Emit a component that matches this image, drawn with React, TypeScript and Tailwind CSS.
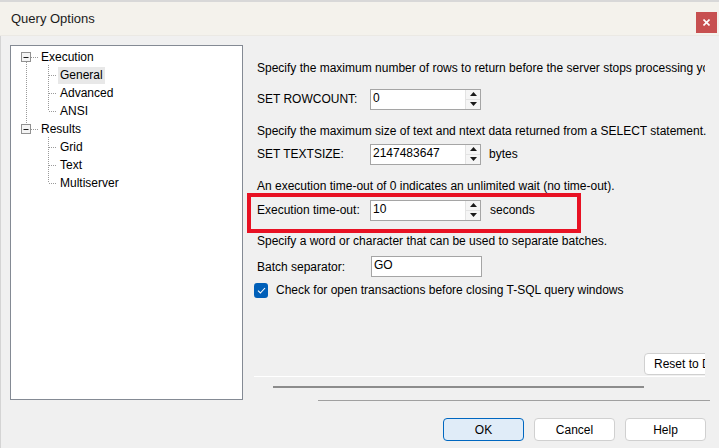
import React from "react";

const font = { fontFamily: '"Liberation Sans", Arial, sans-serif' };

function Spin() {
  return (
    <div className="flex flex-col w-[15px] h-full border-l border-[#e3e3e3] bg-[#f5f5f5]">
      <div className="flex-1 flex items-center justify-center border-b border-[#e3e3e3]">
        <svg width="7" height="4" viewBox="0 0 7 4">
          <path d="M0 4 L3.5 0 L7 4 Z" fill="#1a1a1a" />
        </svg>
      </div>
      <div className="flex-1 flex items-center justify-center">
        <svg width="7" height="4" viewBox="0 0 7 4">
          <path d="M0 0 L3.5 4 L7 0 Z" fill="#1a1a1a" />
        </svg>
      </div>
    </div>
  );
}

function NumInput({ value, spin = true }: { value: string; spin?: boolean }) {
  return (
    <div className="flex items-stretch w-[111px] h-[21px] bg-white border border-[#a5a5a5]">
      <div className="flex-1 pl-[2px] leading-[17px] text-[12px] text-black">{value}</div>
      {spin && <Spin />}
    </div>
  );
}

function Expander({ y }: { y: number }) {
  return (
    <g>
      <rect x="10.5" y={y - 4.5} width="9" height="9" fill="#f4f4f4" stroke="#919191" />
      <path d={`M12.5 ${y + 0.5} H17.5`} stroke="#1a1a1a" />
    </g>
  );
}

function Tree() {
  const dot = { stroke: "#9a9a9a", strokeDasharray: "1 1" };
  const rows: { label: string; child?: boolean; sel?: boolean }[] = [
    { label: "Execution" },
    { label: "General", child: true, sel: true },
    { label: "Advanced", child: true },
    { label: "ANSI", child: true },
    { label: "Results" },
    { label: "Grid", child: true },
    { label: "Text", child: true },
    { label: "Multiserver", child: true },
  ];
  return (
    <div className="relative w-[233px] h-[355px] bg-white border border-[#848a94]">
      <svg className="absolute left-0 top-0" width="231" height="353">
        <path d="M15.5 16 V78" {...dot} />
        <path d="M20 11.5 H27" {...dot} />
        <path d="M20 83.5 H27" {...dot} />
        <path d="M37.5 19 V65" {...dot} />
        <path d="M37.5 91 V137" {...dot} />
        {[29, 47, 65, 101, 119, 137].map((y) => (
          <path key={y} d={`M38 ${y + 0.5} H46`} {...dot} />
        ))}
        <Expander y={11} />
        <Expander y={83} />
      </svg>
      <div className="relative pt-[2px] flex flex-col">
        {rows.map((r) => (
          <div key={r.label} className={`h-[18px] flex items-center ${r.child ? "pl-[47px]" : "pl-[28px]"}`}>
            <span className={`px-[2px] leading-[17px] text-[12px] text-black ${r.sel ? "bg-[#e8e8e8]" : ""}`}>
              {r.label}
            </span>
          </div>
        ))}
      </div>
    </div>
  );
}

function Btn({ label, primary }: { label: string; primary?: boolean }) {
  return (
    <div
      className={`w-[81px] h-[23px] rounded-[4px] flex items-center justify-center text-[12px] text-black border ${
        primary ? "bg-[#e0ecf8] border-[#0067c0]" : "bg-white border-[#d0d0d0]"
      }`}
    >
      {label}
    </div>
  );
}

export default function App() {
  return (
    <div className="w-[719px] h-[448px] overflow-hidden bg-[#f0f0f0] text-black" style={font}>
      {/* title bar */}
      <div className="h-[36px] bg-[#f4f2ec] border-t-2 border-[#d8d8d8] border-b border-b-[#ebe9e4] flex items-center justify-between pl-[11px] pr-[2px]">
        <span className="text-[13px] text-[#1b1b1b]">Query Options</span>
        <div className="w-[21px] h-[21px] mt-[8px] bg-[#c75050] flex items-center justify-center">
          <svg width="7" height="7" viewBox="0 0 7 7">
            <path d="M0.5 0.5 L6.5 6.5 M6.5 0.5 L0.5 6.5" stroke="#fff" strokeWidth="1.6" />
          </svg>
        </div>
      </div>

      <div className="border-l border-[#d4d4d4] h-[412px]">
        <div className="flex pt-[9px] pl-[9px]">
          <Tree />
          <div className="ml-[11px] w-[451px] text-[12px]">
            <div className="pl-[3px]">
              <div className="mt-[15px] w-[448px] h-[16px] leading-[16px] whitespace-nowrap overflow-hidden">
                Specify the maximum number of rows to return before the server stops processing your query.
              </div>
              <div className="mt-[12px] h-[22px] flex items-center">
                <span className="w-[113px]">SET ROWCOUNT:</span>
                <NumInput value="0" />
              </div>
              <div className="mt-[13px] h-[16px] leading-[16px] whitespace-nowrap">
                Specify the maximum size of text and ntext data returned from a SELECT statement.
              </div>
              <div className="mt-[4px] h-[22px] flex items-center">
                <span className="w-[113px]">SET TEXTSIZE:</span>
                <NumInput value="2147483647" />
                <span className="ml-[8px]">bytes</span>
              </div>
              <div className="mt-[13px] h-[16px] leading-[16px] whitespace-nowrap">
                An execution time-out of 0 indicates an unlimited wait (no time-out).
              </div>
              <div className="mt-[-1px] ml-[-10px] w-[334px] h-[40px] border-4 border-[#e81123] pl-[6px] pt-[2px]">
                <div className="h-[22px] flex items-center">
                  <span className="w-[113px]">Execution time-out:</span>
                  <NumInput value="10" />
                  <span className="ml-[9px]">seconds</span>
                </div>
              </div>
              <div className="h-[16px] leading-[16px] whitespace-nowrap">
                Specify a word or character that can be used to separate batches.
              </div>
              <div className="mt-[7px] h-[21px] flex items-center">
                <span className="w-[114px]">Batch separator:</span>
                <NumInput value="GO" spin={false} />
              </div>
            </div>
            <div className="mt-[5px] h-[16px] flex items-center">
              <div className="w-[14px] h-[15px] rounded-[3px] bg-[#005fb8] flex items-center justify-center">
                <svg width="9" height="7" viewBox="0 0 9 7">
                  <path d="M1 3.6 L3.4 6 L8 1" stroke="#fff" strokeWidth="1.1" fill="none" />
                </svg>
              </div>
              <span className="ml-[8px] whitespace-nowrap">
                Check for open transactions before closing T-SQL query windows
              </span>
            </div>
            <div className="mt-[55px] h-[22px] pl-[390px] overflow-hidden">
              <div className="w-[110px] h-[22px] rounded-[4px] bg-white border border-[#d0d0d0] flex items-center pl-[9px] whitespace-nowrap">
                Reset to Defaults
              </div>
            </div>
            <div className="mt-[1px] h-[1px] bg-white" />
            <div className="mt-[9px] ml-[19px] w-[371px] h-[2px] bg-[#8c8c8c]" />
          </div>
        </div>
        <div className="ml-[317px] w-[392px] h-[1px] bg-[#a0a0a0]" />
        <div className="mt-[17px] flex justify-end gap-[10px] pr-[13px]">
          <Btn label="OK" primary />
          <Btn label="Cancel" />
          <Btn label="Help" />
        </div>
      </div>
    </div>
  );
}
